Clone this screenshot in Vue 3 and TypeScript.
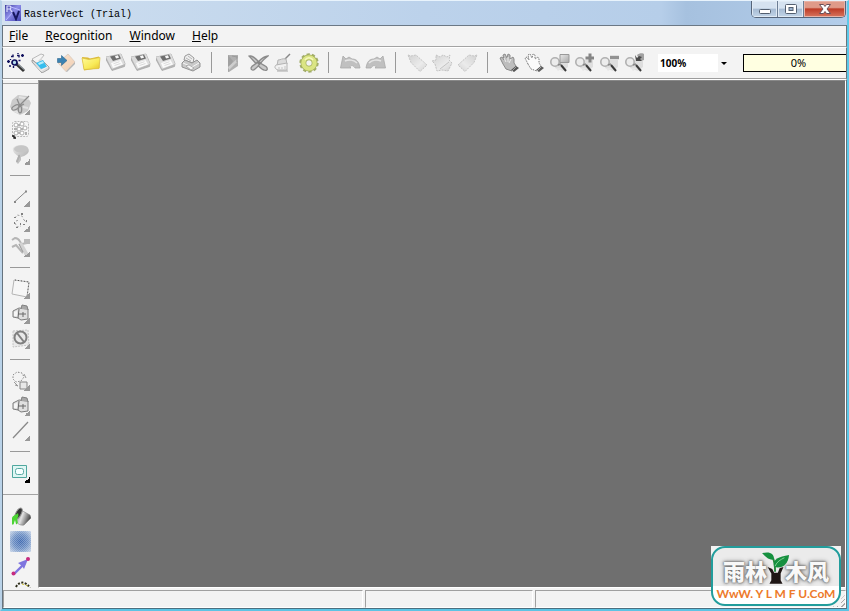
<script setup lang="ts">
import { ref } from 'vue'

interface Tool {
  icon: string
  label: string
  more?: 'grey' | 'black'
}

const menus: string[] = ['File', 'Recognition', 'Window', 'Help']

const toolbar: Tool[][] = [
  [
    { icon: 'wand', label: 'Wizard' },
    { icon: 'scanner', label: 'Scan' },
    { icon: 'import', label: 'Import' },
    { icon: 'folder', label: 'Open' },
    { icon: 'floppy', label: 'Save' },
    { icon: 'floppy', label: 'Save raster' },
    { icon: 'floppy', label: 'Save vector' },
    { icon: 'printer', label: 'Print' },
  ],
  [
    { icon: 'fold', label: 'Cut out' },
    { icon: 'cross', label: 'Delete' },
    { icon: 'brush', label: 'Clean' },
    { icon: 'gear', label: 'Options' },
  ],
  [
    { icon: 'undo', label: 'Undo' },
    { icon: 'redo', label: 'Redo' },
  ],
  [
    { icon: 'tilt-left', label: 'Rotate left' },
    { icon: 'tilt-both', label: 'Rotate by half' },
    { icon: 'tilt-right', label: 'Rotate right' },
  ],
  [
    { icon: 'hand-solid', label: 'Pan' },
    { icon: 'hand', label: 'Grab' },
    { icon: 'zoom-area', label: 'Zoom area' },
    { icon: 'zoom-plus', label: 'Zoom in' },
    { icon: 'zoom-minus', label: 'Zoom out' },
    { icon: 'zoom-back', label: 'Previous zoom' },
  ],
]

const palette: Tool[][] = [
  [
    { icon: 'scissors', label: 'Crop', more: 'grey' },
    { icon: 'checker', label: 'Pattern' },
    { icon: 'funnel', label: 'Filter', more: 'grey' },
  ],
  [
    { icon: 'segment', label: 'Line', more: 'grey' },
    { icon: 'nodes', label: 'Nodes', more: 'grey' },
    { icon: 'pliers', label: 'Edit', more: 'grey' },
  ],
  [
    { icon: 'marquee', label: 'Select', more: 'grey' },
    { icon: 'shapes', label: 'Combine', more: 'grey' },
    { icon: 'forbid', label: 'Exclude', more: 'grey' },
  ],
  [
    { icon: 'lasso', label: 'Group', more: 'grey' },
    { icon: 'shapes', label: 'Arrange', more: 'grey' },
    { icon: 'line', label: 'Draw line', more: 'grey' },
  ],
  [{ icon: 'frame', label: 'Frame', more: 'black' }],
]

const colourTools: Tool[] = [
  { icon: 'bucket', label: 'Fill' },
  { icon: 'blur', label: 'Blur' },
  { icon: 'vector', label: 'Vector' },
  { icon: 'arc', label: 'Arc' },
]

const zoomLevels: string[] = ['50%', '100%', '200%', '400%']
const zoom = ref('100%')
const progress = ref(0)
</script>

<template>
  <svg class="sprite" aria-hidden="true">
    <defs>
      <linearGradient id="g-folder" x1="0" y1="0" x2="1" y2="1">
        <stop offset="0" stop-color="#fffb9c" /><stop offset="0.6" stop-color="#f8ea58" /><stop offset="1" stop-color="#e4c22c" />
      </linearGradient>
      <linearGradient id="g-grey" x1="0" y1="0" x2="1" y2="1">
        <stop offset="0" stop-color="#e8e8e8" /><stop offset="1" stop-color="#a8a8a8" />
      </linearGradient>
      <linearGradient id="g-pale" x1="0" y1="0" x2="1" y2="1">
        <stop offset="0" stop-color="#d2d2d2" /><stop offset="0.6" stop-color="#ebebeb" /><stop offset="1" stop-color="#d2d2d2" />
      </linearGradient>
      <linearGradient id="g-peach" x1="0" y1="0" x2="1" y2="1">
        <stop offset="0" stop-color="#fae3cf" /><stop offset="1" stop-color="#f0cfb4" />
      </linearGradient>
      <linearGradient id="g-can" x1="0" y1="0" x2="1" y2="0.4">
        <stop offset="0" stop-color="#777" /><stop offset="0.5" stop-color="#e0e0e0" /><stop offset="1" stop-color="#4a4a4a" />
      </linearGradient>
      <radialGradient id="g-blue" r="0.7">
        <stop offset="0" stop-color="#3f69b0" /><stop offset="0.5" stop-color="#6e90c4" /><stop offset="1" stop-color="#cfdaea" />
      </radialGradient>
      <linearGradient id="g-app" x1="0" y1="0" x2="1" y2="1">
        <stop offset="0" stop-color="#3b3b9c" /><stop offset="0.45" stop-color="#8c8ce8" /><stop offset="1" stop-color="#4444b4" />
      </linearGradient>
      <pattern id="p-mesh" width="2" height="2" patternUnits="userSpaceOnUse">
        <path d="M0 0h1v1H0zM1 1h1v1H1z" fill="#e6ecf5" fill-opacity=".3" />
      </pattern>
    </defs>
    <symbol id="wand" viewBox="0 0 21 21">
      <path d="M10 11.500 18 19" stroke="#333" stroke-width="3" />
      <path d="M12 12 18 17.500" stroke="#8c9498" stroke-width="1.200" />
      <circle cx="8.500" cy="10.500" r="2.500" fill="#b8e0ee" stroke="#10105c" stroke-width="1.700" />
      <path d="M1 9.500h3M2.500 8v3M5 4.500h2v-2M11 3.500h2v2M12 1v1M15 3.500h3M16.500 2v3M3 14h2M12.500 8.500h2M7.500 14v2M4.500 7v1" stroke="#11115e" stroke-width="1.400" fill="none" />
    </symbol>
    <symbol id="scanner" viewBox="0 0 21 21">
      <path d="m1 7 9-5 3 1-5 7-2 2z" fill="#f4f4f4" stroke="#a9a9a9" stroke-width=".8" />
      <path d="m7 9 5-5-2 6z" fill="#d6d6d6" />
      <path d="m1 8 6 4 5-3 6 6v2l-7 4-10-11z" fill="#dcdcdc" stroke="#939393" stroke-width=".8" />
      <path d="m5 11 7-3 4 7-6 2z" fill="#35bdee" /><path d="m7 11 5-2 1 2-5 2z" fill="#b4ecfa" />
      <path d="m10 18 7-4v1l-7 4-6-6z" fill="#f4f4f4" />
    </symbol>
    <symbol id="import" viewBox="0 0 21 21">
      <path d="m2 11 10-9 7 8-9 9.500z" fill="url(#g-peach)" stroke="#d4c5b9" stroke-width=".7" />
      <path d="m10 19.500 9-9.500v2l-8 8z" fill="#b5b5b5" />
      <path d="M1.500 6.500h4V3.500l5.500 5-5.500 5v-3h-4z" fill="#3b82b2" stroke="#2d668e" stroke-width=".6" />
    </symbol>
    <symbol id="folder" viewBox="0 0 21 21">
      <path d="m1 5 6 .5 2 1L18 4.500l.5 11.500L3 18.500z" fill="#dcb93a" />
      <path d="m1 6 7 1.500 11-2-1 11L3 17.500z" fill="url(#g-folder)" stroke="#dabd3d" stroke-width=".7" />
    </symbol>
    <symbol id="floppy" viewBox="0 0 21 21">
      <path d="m0 5 15-3 4 9.500-.5 3L6 18.500l-6-11z" fill="#b5b5b5" stroke="#a3a3a3" stroke-width=".7" />
      <path d="m0 5 15-3 4 10-13 5z" fill="#dcdcdc" />
      <path d="m4 4.500 9-2 2 4-8 2.500z" fill="#6e6e6e" /><path d="m9 4 3-.7 1 2.400-3 .8z" fill="#f8f8f8" />
      <path d="m5 11 9.500-3 2.500 4.500-10 3.500z" fill="#fafafa" /><path d="m7.500 11.700 6-2M8.500 13.500l6-2" stroke="#ccc" stroke-width=".7" />
    </symbol>
    <symbol id="printer" viewBox="0 0 21 21">
      <path d="m3 8 1-4 4-2 5 4-1 5z" fill="#eee" stroke="#999" /><path d="m7 4 4 3M5 6l5 3" stroke="#b5b5b5" />
      <path d="m1 11 3-3 7 3 5-3 3 3v4l-7 4-11-4z" fill="#c9c9c9" stroke="#939393" />
      <path d="m2 11 9 4 7-4" stroke="#f6f6f6" fill="none" /><path d="m5 14 3-1 5 3-3 2z" fill="#f5f5f5" stroke="#999" stroke-width=".7" />
    </symbol>
    <symbol id="fold" viewBox="0 0 21 21">
      <path d="M5 3h10v11l-9 6H5z" fill="#b0b0b0" /><path d="m5 3 5 6-5 11z" fill="#a0a0a0" />
      <path d="m5 15 10-9v3L6 18z" fill="#cecece" /><path d="m9 4 5 1M14 4v6" stroke="#999" />
    </symbol>
    <symbol id="cross" viewBox="0 0 21 21">
      <g fill="#c9c9c9" stroke="#8b8b8b" stroke-width="1.300">
        <path d="M1 4c3-1 6 2 10 6 3 3 8 4 8 6 1 2-1 3-3 2-4-1-8-7-15-14z" />
        <path d="M20 4c-4 0-7 3-10 6-3 3-6 3-7 6 0 2 2 3 4 1 4-3 6-8 13-13z" />
      </g>
      <path d="m8 10 3-1 3 2-3 2z" fill="#858585" />
    </symbol>
    <symbol id="brush" viewBox="0 0 21 21">
      <path d="m17 2-5 5" stroke="#888" stroke-width="1.500" /><path d="M5 8c3 0 4-2 8-1l1 5-10 2z" fill="#dcdcdc" stroke="#b3b3b3" />
      <path d="m3 13 11-2v7H5c-3-1-4-3-2-5z" fill="#f1f1f1" stroke="#b3b3b3" /><path d="M6 15v2M9 15v2M12 14v3" stroke="#c5c5c5" /><path d="M4 19h11" stroke="#aaa" />
    </symbol>
    <symbol id="gear" viewBox="0 0 21 21">
      <circle cx="11" cy="11" r="8" fill="none" stroke="#a3ad6c" stroke-width="3.400" stroke-dasharray="3 2.026" />
      <circle cx="11" cy="11" r="5.600" fill="none" stroke="#a1ad5b" stroke-width="5.800" />
      <circle cx="11" cy="11" r="5.600" fill="none" stroke="#dbe584" stroke-width="4.400" />
      <path d="M7 8c2-3 6-3 8 0" stroke="#f6f8bd" stroke-width="1.500" fill="none" />
    </symbol>
    <symbol id="undo" viewBox="0 0 21 21">
      <path d="M.5 16 3 4l3 3 3-2 3 2c5 0 7 3 8 9h-5c-1-3-5-3-5-1l1 1z" fill="#c0c0c0" stroke="#a9a9a9" stroke-width=".8" />
      <path d="M5 9c4-2 9-1 12 2" stroke="#e6e6e6" stroke-width="1.500" fill="none" />
    </symbol>
    <symbol id="redo" viewBox="0 0 21 21">
      <g transform="matrix(-1 0 0 1 21 0)"><use href="#undo" width="21" height="21" /></g>
    </symbol>
    <symbol id="tilt-left" viewBox="0 0 21 21">
      <path d="m1 3 3 1 5-1 11 10-7 6.500-9-9z" fill="url(#g-pale)" stroke="#c5c5c5" stroke-dasharray="2 1" />
    </symbol>
    <symbol id="tilt-both" viewBox="0 0 21 21">
      <path d="m4 3 4 2 3-2 4 2 3-2-1 5 3 3-4 8-6-1-5 1-2-7-3-3 4-1z" fill="url(#g-pale)" stroke="#c2c2c2" stroke-dasharray="2 1" />
      <path d="m8 17 9-7" stroke="#c3c3c3" />
    </symbol>
    <symbol id="tilt-right" viewBox="0 0 21 21">
      <g transform="matrix(-1 0 0 1 21 0)"><use href="#tilt-left" width="21" height="21" /></g>
    </symbol>
    <symbol id="hand-solid" viewBox="0 0 21 21">
      <path d="M4 12 1 6l2-1 2 3-1-5 2-1 2 4 1-4 2 1v4l3-2 1 2v4l2 3-4 5-6-2z" fill="#bdbdbd" stroke="#8b8b8b" />
      <path d="m5 6 2 4M9 5v5M12 7l-2 4" stroke="#ededed" /><path d="m12 18 5-4 3 2-5 4z" fill="#555" /><path d="m13 19 4-4" stroke="#9c9c9c" />
    </symbol>
    <symbol id="hand" viewBox="0 0 21 21">
      <path d="M4 12 1 6l2-1 2 3-1-5 2-1 2 4 1-4 2 1v4l3-2 1 2v4l2 3-4 5-6-2z" fill="#fbfbfb" stroke="#777" stroke-dasharray="1.500 1" />
      <path d="m12 18 5-4 3 2-5 4z" fill="#5c5c5c" /><path d="m13 19 4-4" stroke="#aaa" />
    </symbol>
    <symbol id="lens" viewBox="0 0 21 21">
      <path d="m8 8 11 0v7l-5 4-8-3z" fill="#dedede" /><path d="m7 16 2 3 4-3z" fill="#e6e6e6" />
      <circle cx="6" cy="10" r="4.200" fill="#ececec" stroke="#b0b0b0" stroke-width="1.600" />
      <path d="m9 13 3-1" stroke="#888" stroke-width="1.500" /><path d="m12 13 5 6" stroke="#3a3a3a" stroke-width="2" />
    </symbol>
    <symbol id="zoom-area" viewBox="0 0 21 21">
      <use href="#lens" width="21" height="21" /><path d="M11 2.500h9v8h-9z" fill="url(#g-grey)" stroke="#999" />
    </symbol>
    <symbol id="zoom-plus" viewBox="0 0 21 21">
      <use href="#lens" width="21" height="21" /><path d="M16 1.500v9M11.500 6H20" stroke="#858585" stroke-width="3" />
    </symbol>
    <symbol id="zoom-minus" viewBox="0 0 21 21">
      <use href="#lens" width="21" height="21" /><path d="M11 5.500h9" stroke="#929292" stroke-width="3.400" />
    </symbol>
    <symbol id="zoom-back" viewBox="0 0 21 21">
      <use href="#lens" width="21" height="21" /><path d="M13 3c2-2 6-2 7-1v6l-4 1" fill="#a1a1a1" /><path d="m11 3 1 6h6l-2-2 2-2-3-1-2 2z" fill="#4a4a4a" />
    </symbol>
    <symbol id="scissors" viewBox="0 0 21 21">
      <path d="M2 6 8 1l9 1 4 7-3 8-8 4-6-3-4-5z" fill="#cbcbcb" /><path d="m9 3 10 2M3 16l6 3M13 13l5 1" stroke="#e3e3e3" stroke-width="2" />
      <g fill="none" stroke="#8c8c8c" stroke-width="1.300"><path d="m19 2-9 9M7 5l3 7 4-2" /><ellipse cx="5.500" cy="13.500" rx="4" ry="2" transform="rotate(-30 5.500 13.500)" /><ellipse cx="10" cy="15.500" rx="1.700" ry="3.300" /></g>
    </symbol>
    <symbol id="checker" viewBox="0 0 21 21">
      <rect x="2.500" y="2.500" width="16" height="15" rx="2" fill="#f5f5f5" stroke="#bababa" stroke-dasharray="2 1" />
      <g fill="#fff" stroke="#adadad"><circle cx="6" cy="6" r="2" /><circle cx="12" cy="5" r="2" /><circle cx="9" cy="10" r="2" /><circle cx="15" cy="9" r="2" /><circle cx="12" cy="14" r="2" /><circle cx="6" cy="14" r="2" /></g>
      <path d="M8 5h2v2H8zm-4 4h3v2H4zm7 0h2v2h-2zm-3 4h2v2H8zm7 0h2v3h-2z" fill="#b0b0b0" /><path d="M2 17h2v2h2" stroke="#111" stroke-width="1.300" fill="none" />
    </symbol>
    <symbol id="funnel" viewBox="0 0 21 21">
      <path d="M3 4c3-4 13-4 15 0 3 5-3 8-7 9v3l-3 4-2-2 2-6C5 10 2 7 3 4z" fill="url(#g-grey)" /><ellipse cx="11" cy="5" rx="7" ry="3.500" fill="#c6c6c6" /><path d="M7 18c0-3 3-4 2-7" stroke="#b0b0b0" stroke-width="2" fill="none" />
    </symbol>
    <symbol id="segment" viewBox="0 0 21 21">
      <path d="m5 15.500 11-10" stroke="#888" /><path d="M4 15h2v2H4zM15 4.500h2v2h-2z" fill="#888" />
    </symbol>
    <symbol id="nodes" viewBox="0 0 21 21">
      <path d="m5 7 2-3 5 1 2 4M5 12l2 4 4-1M14 9l3 3M6 10l3-1" fill="none" stroke="#a0a0a0" stroke-dasharray="2 2" />
      <path d="M4 6h2v1H4zm7-4h2v2h-2zm5 7h1v2h-1zm-6 3h1v2h-1zm-4 4h2v1H6zm-2-5h1v2H4zm9 2h2v1h-2z" fill="#808080" />
    </symbol>
    <symbol id="pliers" viewBox="0 0 21 21">
      <path d="m2 4 3-2c5 0 4 4 7 6l5-1M2 11l4-2 7 8" fill="none" stroke="#b5b5b5" stroke-width="2" />
      <path d="M14 3h6v5h-6z" fill="#bbb" /><path d="m10 7 4 7 3 5" stroke="#d2d2d2" stroke-width="4" /><path d="m9 8 4 8" stroke="#999" />
    </symbol>
    <symbol id="marquee" viewBox="0 0 21 21">
      <path d="M4 2 19 4l-2 15-15-3z" fill="#f6f6f6" stroke="#b5b5b5" /><path d="m5 2 14 2-2 15" fill="none" stroke="#555" stroke-dasharray="1 2" />
    </symbol>
    <symbol id="shapes" viewBox="0 0 21 21">
      <path d="m3 8 6-3 9 1v10l-7 1-3-2-5-1z" fill="#e0e0e0" stroke="#7c7c7c" /><path d="m11 6 1-4 5 1 1 4" fill="#a8a8a8" stroke="#808080" />
      <path d="m9 6-1 9M13 9v5M8 11h8" stroke="#6a6a6a" fill="none" /><path d="m4 9 3-1v5H4z" fill="#f6f6f6" />
    </symbol>
    <symbol id="forbid" viewBox="0 0 21 21">
      <path d="M3 3 18 2l1 15-16 2z" fill="#e9e9e9" stroke="#c4c4c4" stroke-dasharray="2 1" /><circle cx="10.500" cy="9.500" r="6" fill="none" stroke="#808080" stroke-width="2" /><path d="m7 5 7 9" stroke="#808080" stroke-width="2" />
    </symbol>
    <symbol id="lasso" viewBox="0 0 21 21">
      <path d="m3 5 4-3 5 1 2 4-3 4-5 1-3-3z" fill="none" stroke="#858585" stroke-dasharray="1.500 1.500" /><path d="m4 12 4 4-3-1M14 4l2 4" fill="none" stroke="#999" /><path d="M10 12h7v7h-7z" fill="#e8e8e8" stroke="#868686" />
    </symbol>
    <symbol id="line" viewBox="0 0 21 21"><path d="m3 18 15-16" stroke="#888" stroke-width="1.200" /></symbol>
    <symbol id="frame" viewBox="0 0 21 21">
      <path d="M2.500 3.500h14v12h-14z" fill="#dff6f3" stroke="#4fa79e" /><rect x="5.500" y="6.500" width="8" height="6" rx="2" fill="#f5ffff" stroke="#5aaaa4" />
    </symbol>
    <symbol id="bucket" viewBox="0 0 21 21">
      <path d="m9 3 11 6 1 3-7 7c-4 1-8-2-8-6z" fill="url(#g-can)" stroke="#777" stroke-width=".5" />
      <ellipse cx="8.500" cy="7.500" rx="2.600" ry="6" transform="rotate(28 8.500 7.500)" fill="#333" stroke="#8e8e8e" />
      <path d="M8 7c-2 2-5 2-6 5v6c0 1 2 1 2-1l1-3 1 4c2 1 2-2 1-5 1-2 2-3 1-6z" fill="#4bd433" />
    </symbol>
    <symbol id="blur" viewBox="0 0 21 21"><path d="M0 0h21v21H0z" fill="url(#g-blue)" /><path d="M0 0h21v21H0z" fill="url(#p-mesh)" /></symbol>
    <symbol id="vector" viewBox="0 0 21 21">
      <path d="m4 18 11-11" stroke="#7f75df" stroke-width="2.400" /><path d="m8 7 10-4-4 10-2-3z" fill="#7f75df" /><circle cx="3.500" cy="17.500" r="2" fill="#c72b7f" /><circle cx="18" cy="3" r="2" fill="#c72b7f" />
    </symbol>
    <symbol id="arc" viewBox="0 0 21 21"><path d="M6 6c3-6 10-6 14 1" fill="none" stroke="#2b2b18" stroke-width="2" stroke-dasharray="2 1.500" /><path d="m12 3 6 2" stroke="#d5c83a" stroke-dasharray="2 2" /></symbol>
  </svg>

  <div class="window">
    <header class="titlebar">
      <svg class="app-icon" viewBox="0 0 16 16" aria-hidden="true">
        <path d="M0 0h16v16H0z" fill="url(#g-app)" />
        <path d="M2 7V1h3q2 1.500 0 3H2m3 0 2 3" fill="none" stroke="#dcdcff" stroke-width="1.200" />
        <path d="m1 15 7-8M6 2l9 3" stroke="#b9b9ff" /><path d="m8 7 3 7 3-8" fill="none" stroke="#161660" stroke-width="2" />
      </svg>
      <h1>RasterVect (Trial)</h1>
      <div class="captions">
        <button type="button" aria-label="Minimize">
          <svg viewBox="0 0 14 12"><rect x="1.500" y="6.500" width="11" height="4" rx="1" fill="#fff" stroke="#535f70" /></svg>
        </button>
        <button type="button" aria-label="Maximize">
          <svg viewBox="0 0 14 12"><rect x="1.500" y="1.500" width="11" height="9" rx="1" fill="#fff" stroke="#535f70" /><rect x="5" y="4.500" width="4" height="3" fill="#9db5d0" stroke="#535f70" /></svg>
        </button>
        <button type="button" class="close" aria-label="Close">
          <svg viewBox="0 0 14 12"><path d="M1.500 1.500h4L7 3.500l1.500-2h4L9 6l3.500 4.500h-4L7 8.500l-1.500 2h-4L5 6z" fill="#fff" stroke="#6b4f58" /></svg>
        </button>
      </div>
    </header>

    <nav class="menubar">
      <a v-for="menu in menus" :key="menu" href="#"><u>{{ menu[0] }}</u>{{ menu.slice(1) }}</a>
    </nav>

    <div class="toolbar" role="toolbar" aria-label="Main tools">
      <div v-for="(group, index) in toolbar" :key="index" class="group">
        <button v-for="tool in group" :key="tool.label" type="button" :aria-label="tool.label">
          <svg><use :href="'#' + tool.icon" /></svg>
        </button>
      </div>
      <div class="zoom">
        <select v-model="zoom" aria-label="Zoom level">
          <option v-for="level in zoomLevels" :key="level">{{ level }}</option>
        </select>
        <span class="drop" aria-hidden="true"></span>
      </div>
      <div class="progress" role="progressbar" aria-label="Progress" :aria-valuenow="progress">{{ progress }}%</div>
    </div>

    <main class="body">
      <aside class="palette">
        <div class="section first">
          <div v-for="(group, index) in palette" :key="index" class="stack">
            <button v-for="tool in group" :key="tool.label" type="button" :aria-label="tool.label">
              <svg><use :href="'#' + tool.icon" /></svg>
              <i v-if="tool.more" class="more" :class="tool.more"></i>
            </button>
          </div>
        </div>
        <div class="section">
          <div class="stack">
            <button v-for="tool in colourTools" :key="tool.label" type="button" :aria-label="tool.label">
              <svg><use :href="'#' + tool.icon" /></svg>
            </button>
          </div>
        </div>
      </aside>
      <div class="canvas"></div>
    </main>

    <footer class="status">
      <div></div>
      <div></div>
      <div class="last"><span class="grip"></span></div>
    </footer>

    <div class="badge">
      <div class="badge-inner">
        <div class="brand">
          <span>雨林</span>
          <svg viewBox="0 0 30 36" aria-hidden="true">
            <path d="m6 17 5 2 2 4 4 0 2-5 4-1-3 7 0 7 2 4H8l2-4v-7z" fill="#1f1614" />
            <path d="M14 22c0-6 0-9-2-14" fill="none" stroke="#24863a" stroke-width="2" />
            <path d="M0 2c8-2 13 0 13 7C7 10 4 6 0 2z" fill="#15903f" />
            <path d="M13 17C11 8 18 6 29 4c-1 10-7 15-16 13z" fill="#15903f" /><path d="M14 16c2-5 6-7 10-9" stroke="#8ad39a" fill="none" />
          </svg>
          <span>木风</span>
        </div>
        <div class="site">WwW. Y L M F U.CoM</div>
      </div>
    </div>
  </div>
</template>

<style>
body {
  margin: 0;
  overflow: hidden;
}
</style>

<style scoped>
.sprite {
  position: absolute;
  width: 0;
  height: 0;
}
.window {
  position: relative;
  box-sizing: border-box;
  display: flex;
  flex-direction: column;
  height: 100vh;
  border: solid;
  border-width: 1px 2px 2px 2px;
  border-color: #e8f3fc #5cc8e8 #5cc4e4 #b9d2e8;
  background: #f3f3f3;
  font-family: "Noto Sans", sans-serif;
  color: #000;
}
button {
  padding: 0;
  border: 0;
  background: none;
}
.titlebar {
  display: flex;
  flex: none;
  align-items: center;
  height: 24px;
  padding-left: 3px;
  background: linear-gradient(90deg, #d3e0ef 0%, #c9dbee 14%, #bcd2eb 50%, #b6cee9 78%, #a6c1df 81%, #b3cdea 100%);
}
.app-icon {
  width: 16px;
  height: 16px;
}
h1 {
  flex: 1;
  margin: 3px 0 0 3px;
  font: 10px/16px "Liberation Mono", monospace;
}
.captions {
  display: flex;
  align-self: flex-start;
  margin-right: 1px;
  border: 1px solid #56657a;
  border-top: 0;
  border-radius: 0 0 5px 5px;
  overflow: hidden;
}
.captions button {
  display: flex;
  align-items: center;
  justify-content: center;
  width: 26px;
  height: 16px;
  border-right: 1px solid #6c7e95;
  box-sizing: border-box;
  background: linear-gradient(#d5e2f0 0 45%, #a6bbd3 50%, #c2d5e8);
  box-shadow: inset 0 0 0 1px #e0eaf4;
}
.captions .close {
  width: 41px;
  border-right: 0;
  background: linear-gradient(#df9a89 0 40%, #bd3c27 50%, #d8765f);
  box-shadow: inset 0 0 0 1px #e8b3a7;
}
.captions svg {
  width: 14px;
  height: 12px;
}
.menubar {
  display: flex;
  flex: none;
  gap: 17px;
  height: 20px;
  padding-left: 6px;
  border: solid;
  border-width: 1px;
  border-color: #6b7885 #67747d #a3a3a3 #66737e;
  font-size: 12px;
  line-height: 20px;
}
.menubar a {
  color: #000;
  text-decoration: none;
}
.toolbar {
  display: flex;
  flex: none;
  align-items: flex-start;
  box-sizing: border-box;
  height: 32px;
  padding: 2px 0 0 1px;
  border: solid;
  border-width: 1px;
  border-color: #fff #67747d #9d9d9d #66737e;
}
.group {
  display: flex;
}
.group + .group::before {
  content: "";
  width: 1px;
  height: 21px;
  margin: 2px 9px 0 7px;
  background: #999;
}
.group button {
  width: 25px;
  height: 25px;
}
.group svg,
.stack svg {
  display: block;
  width: 21px;
  height: 21px;
  margin: 2px;
}
.zoom {
  position: relative;
  width: 72px;
  margin: 4px 13px 0 11px;
}
.zoom select {
  display: block;
  appearance: none;
  width: 100%;
  height: 18px;
  padding: 0 2px;
  border: 0;
  border-radius: 0;
  background: linear-gradient(90deg, #fff 60px, #f3f3f3 60px);
  font: bold 10px/16px "Noto Sans", sans-serif;
  color: #000;
}
.drop {
  position: absolute;
  top: 8px;
  right: 3px;
  border: 3px solid transparent;
  border-top-color: #000;
  border-bottom: 0;
  pointer-events: none;
}
.progress {
  flex: 1;
  box-sizing: border-box;
  height: 18px;
  margin-top: 4px;
  padding-left: 7px;
  border: 1px solid #000;
  border-right: 0;
  background: #ffffe1;
  font-size: 11px;
  line-height: 16px;
  text-align: center;
}
.body {
  display: flex;
  flex: 1;
  min-height: 0;
  border: solid;
  border-width: 1px 1px 0 1px;
  border-color: #fff #67747d #fff #66737e;
}
.palette {
  flex: none;
  width: 35px;
  overflow: hidden;
}
.section {
  padding-top: 9px;
  border-top: 1px solid #a3a3a3;
}
.section.first {
  margin-top: 3px;
  padding: 8px 0 9px;
}
.stack {
  display: flex;
  flex-direction: column;
  align-items: center;
}
.stack + .stack::before {
  content: "";
  width: 20px;
  height: 1px;
  margin: 8px 2px 8px 0;
  background: #999;
}
.stack button {
  position: relative;
  width: 25px;
  height: 25px;
}
.more {
  position: absolute;
  right: 3px;
  bottom: 2px;
  width: 6px;
  height: 6px;
  background: linear-gradient(135deg, transparent 50%, #999 50%);
}
.more.black {
  background: linear-gradient(135deg, transparent 50%, #000 50%);
}
.canvas {
  flex: 1;
  border: 1px solid;
  border-color: #888 #fff #fff #999;
  background: #6f6f6f;
}
.status {
  display: flex;
  flex: none;
  gap: 2px;
  padding-top: 2px;
  border: solid;
  border-width: 0 1px 1px 1px;
  border-color: #67747d #67747d #4c7080 #66737e;
}
.status div {
  flex: 0 0 168px;
  box-sizing: border-box;
  height: 18px;
  border: 1px solid;
  border-color: #a0a0a0 #fff #fff #a0a0a0;
}
.status div:first-child {
  flex-basis: 360px;
}
.status .last {
  display: flex;
  flex: 1;
  align-items: flex-end;
  justify-content: flex-end;
}
.grip {
  width: 12px;
  height: 12px;
  background: repeating-linear-gradient(135deg, #f3f3f3 0 2px, #a8a8a8 2px 3px);
  clip-path: polygon(100% 0, 100% 100%, 0 100%);
}
.badge {
  position: absolute;
  right: 6px;
  bottom: 3px;
  width: 130px;
  background: #f3f3f3;
}
.badge-inner {
  box-sizing: border-box;
  height: 60px;
  padding-top: 3px;
  border: 2px solid #229d9c;
  border-radius: 14px;
  background: linear-gradient(#ebebeb 38px, #fff 38px);
}
.brand {
  display: flex;
  align-items: flex-end;
  justify-content: center;
  height: 34px;
  font: 900 22px/24px "Liberation Sans", "Noto Sans CJK SC", sans-serif;
  color: #f8f8f8;
  text-shadow: 0 0 2px #666, 0 0 3px #777, 0 0 5px #888;
}
.brand svg {
  width: 28px;
  height: 34px;
  margin: 0 -5px;
}
.site {
  font: 700 12px/18px Lato, sans-serif;
  text-align: center;
  color: #ed7a2b;
}
</style>
